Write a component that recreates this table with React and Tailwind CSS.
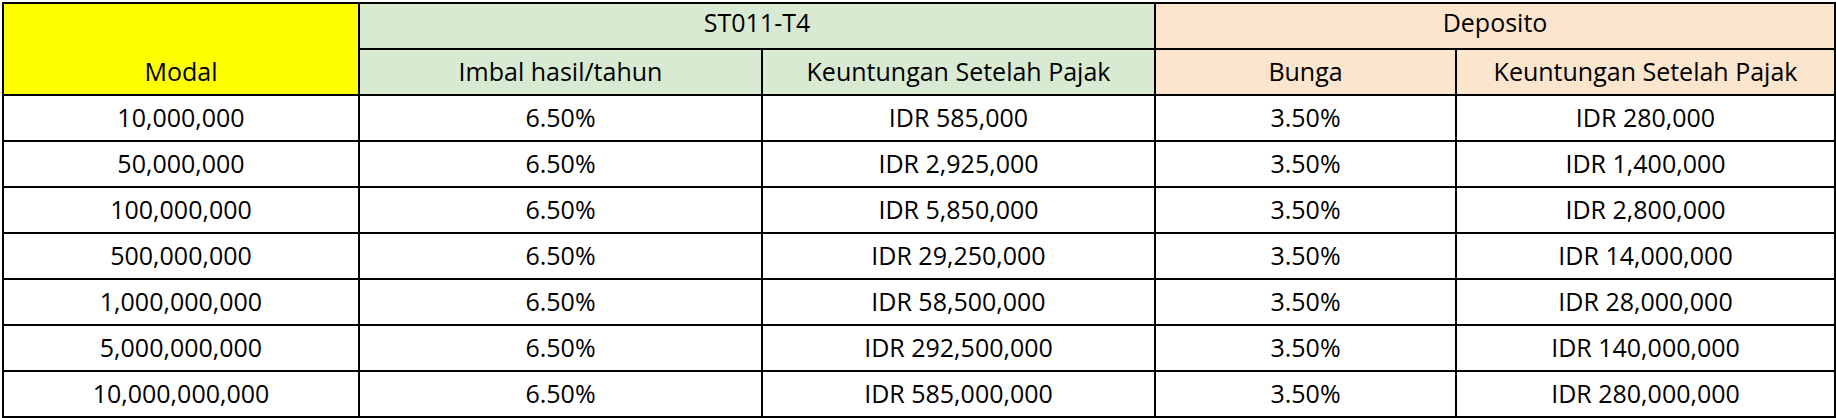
import React from "react";

const rows = [
  ["10,000,000", "IDR 585,000", "IDR 280,000"],
  ["50,000,000", "IDR 2,925,000", "IDR 1,400,000"],
  ["100,000,000", "IDR 5,850,000", "IDR 2,800,000"],
  ["500,000,000", "IDR 29,250,000", "IDR 14,000,000"],
  ["1,000,000,000", "IDR 58,500,000", "IDR 28,000,000"],
  ["5,000,000,000", "IDR 292,500,000", "IDR 140,000,000"],
  ["10,000,000,000", "IDR 585,000,000", "IDR 280,000,000"],
];

const cell = "border-2 border-black text-center align-bottom p-0 pb-[10px] leading-none";

export default function App() {
  return (
    <div className="w-[1836px] h-[418px] bg-white overflow-hidden pt-[2px] pl-[2px]" style={{ fontFamily: '"Open Sans", "Liberation Sans", sans-serif' }}>
      <table className="border-collapse table-fixed text-[25px] text-black w-[1832px]">
        <colgroup>
          <col className="w-[356px]" />
          <col className="w-[403px]" />
          <col className="w-[393px]" />
          <col className="w-[301px]" />
          <col className="w-[379px]" />
        </colgroup>
        <thead>
          <tr className="h-[46px]">
            <th rowSpan={2} className={`${cell} font-normal bg-[#ffff00]`}>Modal</th>
            <th colSpan={2} className={`${cell} font-normal bg-[#d9ead3] pb-[13px]`}>ST011-T4</th>
            <th colSpan={2} className={`${cell} font-normal bg-[#fce5cd] pb-[13px]`}>Deposito</th>
          </tr>
          <tr className="h-[46px]">
            <th className={`${cell} font-normal bg-[#d9ead3]`}>Imbal hasil/tahun</th>
            <th className={`${cell} font-normal bg-[#d9ead3]`}>Keuntungan Setelah Pajak</th>
            <th className={`${cell} font-normal bg-[#fce5cd]`}>Bunga</th>
            <th className={`${cell} font-normal bg-[#fce5cd]`}>Keuntungan Setelah Pajak</th>
          </tr>
        </thead>
        <tbody>
          {rows.map((r) => (
            <tr key={r[0]} className="h-[46px]">
              <td className={cell}>{r[0]}</td>
              <td className={cell}>6.50%</td>
              <td className={cell}>{r[1]}</td>
              <td className={cell}>3.50%</td>
              <td className={cell}>{r[2]}</td>
            </tr>
          ))}
        </tbody>
      </table>
    </div>
  );
}
